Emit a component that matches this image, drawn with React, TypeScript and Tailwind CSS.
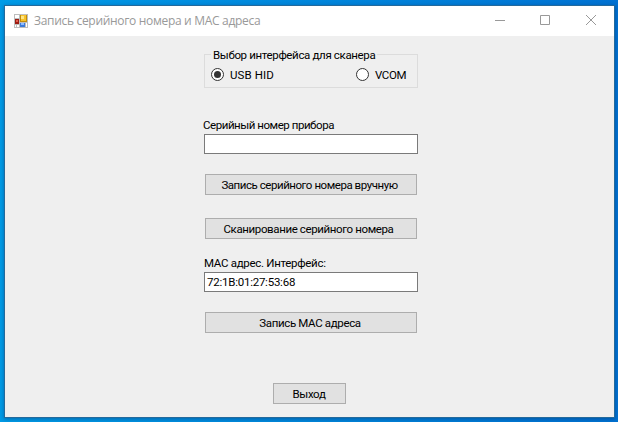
import type { ReactNode } from "react";

function AppIcon() {
  return (
    <svg className="ml-[9px] h-[14px] w-[14px]" viewBox="0 0 14 14" shapeRendering="crispEdges">
      <path d="M0 0H14V14H0Z" fill="#bdbdbd" />
      <path d="M1 1H5V4H1ZM1 11H2V13H1ZM3 11H5V13H3ZM12 9H13V13H12Z" fill="#fff" />
      <rect x="1" y="5" width="4" height="5" fill="#9d1c12" />
      <rect x="2" y="6" width="2" height="2" fill="#e25a4c" />
      <rect x="6" y="1" width="7" height="7" fill="#c38c08" />
      <rect x="7" y="1" width="5" height="6" fill="#f6c22c" />
      <rect x="7" y="2" width="3" height="3" fill="#ffe584" />
      <rect x="6" y="9" width="5" height="4" fill="#3d7bd9" />
      <rect x="7" y="9" width="3" height="2" fill="#8fbcff" />
    </svg>
  );
}

function PushButton({ children, className }: { children: ReactNode; className: string }) {
  return (
    <button
      className={`flex h-[21px] items-center justify-center whitespace-nowrap border border-[#adadad] bg-[#e1e1e1] ${className}`}
    >
      {children}
    </button>
  );
}

function Radio({ checked = false }: { checked?: boolean }) {
  return (
    <span className="flex h-[13px] w-[13px] items-center justify-center rounded-full border border-[#333] bg-white">
      {checked && <span className="h-[7px] w-[7px] rounded-full bg-[#333]" />}
    </span>
  );
}

export default function App() {
  return (
    <div className="h-[422px] w-[618px] overflow-hidden bg-[linear-gradient(90deg,#009be6_0%,#0087dc_50%,#0072d2_100%)] pl-1 pt-[5px] font-['Roboto','Liberation_Sans',sans-serif] text-[11.5px] leading-[14px] tracking-[-0.35px] text-black">
      <div className="flex h-[413px] w-[611px] flex-col border border-[#246a9c] bg-[#efefef] shadow-[0_1px_4px_rgba(0,30,80,0.4)]">
        <header className="flex h-[30px] shrink-0 items-center bg-white">
          <AppIcon />
          <h1 className="ml-[6px] whitespace-nowrap font-['Open_Sans','Noto_Sans',sans-serif] text-[12px] leading-4 tracking-[-0.31px] text-[#999]">
            Запись серийного номера и MAC адреса
          </h1>
          <svg className="ml-auto h-[30px] w-[143px]" viewBox="0 0 143 30" fill="none" stroke="#999">
            <path d="M24 14.5H34M69.5 9.5H78.5V18.5H69.5Z" />
            <path d="M115 9L125 19M125 9L115 19" />
          </svg>
        </header>
        <main className="flex flex-col pl-[199px]">
          <fieldset className="mt-[11px] h-[41px] w-[214px] border border-[#dcdcdc] pl-[6px]">
            <legend className="h-[14px] whitespace-nowrap px-[2px] leading-4">Выбор интерфейса для сканера</legend>
            <div className="mt-[6px] flex h-[14px] items-center">
              <Radio checked />
              <span className="ml-[6px] w-[126px] pt-px tracking-[0.1px]">USB HID</span>
              <Radio />
              <span className="ml-[6px] pt-px tracking-[-0.4px]">VCOM</span>
            </div>
          </fieldset>
          <label className="-ml-px mt-[30px] h-4 whitespace-nowrap tracking-[-0.45px]">Серийный номер прибора</label>
          <div className="h-5 w-[214px] border border-[#7a7a7a] bg-white" />
          <PushButton className="ml-px mt-5 w-[212px] pr-[3px] tracking-[-0.45px]">Запись серийного номера вручную</PushButton>
          <PushButton className="ml-px mt-[23px] w-[212px] pr-[5px] tracking-[-0.38px]">Сканирование серийного номера</PushButton>
          <label className="mt-[17px] h-4 whitespace-nowrap tracking-[-0.3px]">MAC адрес. Интерфейс:</label>
          <div className="h-5 w-[214px] border border-[#7a7a7a] bg-white pl-[2px] pt-[2px] tracking-[-0.24px]">72:1B:01:27:53:68</div>
          <PushButton className="ml-px mt-5 w-[212px] pr-[2px]">Запись MAC адреса</PushButton>
          <PushButton className="ml-[69px] mt-[50px] w-[73px] pr-px">Выход</PushButton>
        </main>
      </div>
    </div>
  );
}
